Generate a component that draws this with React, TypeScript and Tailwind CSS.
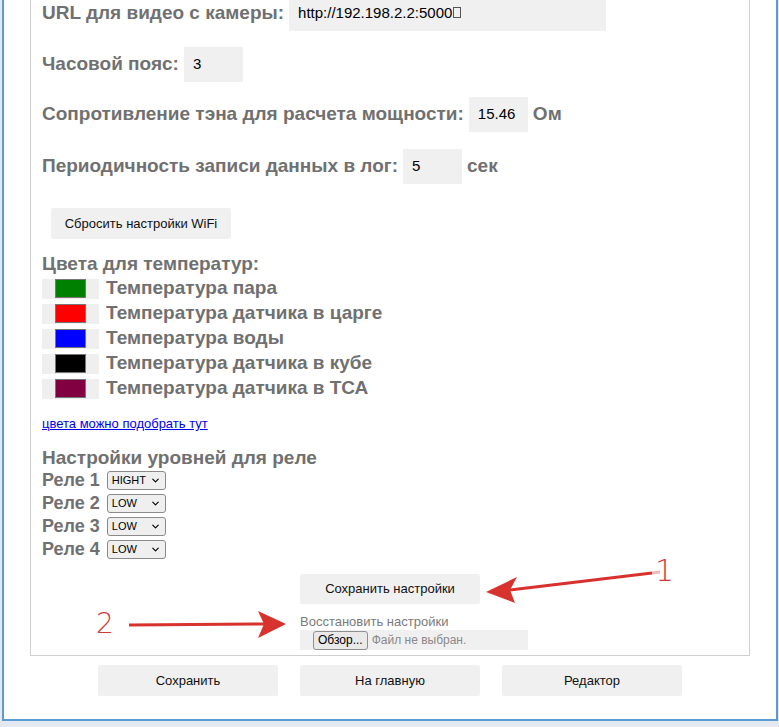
import { ChevronDown } from 'lucide-react';

const colors = [
  { color: '#008000', label: 'Температура пара' },
  { color: '#ff0000', label: 'Температура датчика в царге' },
  { color: '#0000ff', label: 'Температура воды' },
  { color: '#000000', label: 'Температура датчика в кубе' },
  { color: '#800040', label: 'Температура датчика в ТСА' },
];

const relays = [
  { name: 'Реле 1', value: 'HIGHT' },
  { name: 'Реле 2', value: 'LOW' },
  { name: 'Реле 3', value: 'LOW' },
  { name: 'Реле 4', value: 'LOW' },
];

function Field({ value, width, children }: { value: string; width: string; children?: React.ReactNode }) {
  return (
    <div className={`${width} h-[35px] ml-[5px] bg-[#f0f0f0] flex items-center pl-[9px] text-[15px] text-black font-normal`}>
      {value}
      {children}
    </div>
  );
}

export default function App() {
  return (
    <div className="relative w-[779px] h-[727px] overflow-hidden bg-[#e4e9ef] font-['Liberation_Sans',Arial,sans-serif]">
      <div className="ml-[2px] w-[776px] h-[725px] bg-white border-x-2 border-b-2 border-[#5b9bd5] pl-[26px]">
        {/* settings panel */}
        <div className="-mt-[4px] w-[720px] h-[660px] border-x border-b border-[#cfcfcf] pl-[11px] flex flex-col items-start text-[#707070] font-bold">
          <div className="h-[35px] flex items-center text-[19px]">
            URL для видео с камеры:
            <Field value="http://192.198.2.2:5000" width="w-[317px]">
              <span className="inline-block w-[8px] h-[11px] border border-[#555] ml-[1px] mb-[2px]" />
            </Field>
          </div>
          <div className="mt-[16px] h-[35px] flex items-center text-[19px]">
            Часовой пояс:
            <Field value="3" width="w-[59px]" />
          </div>
          <div className="mt-[15px] h-[35px] flex items-center text-[19px]">
            Сопротивление тэна для расчета мощности:
            <Field value="15.46" width="w-[59px]" />
            <span className="ml-[5px]">Ом</span>
          </div>
          <div className="mt-[17px] h-[35px] flex items-center text-[19px]">
            Периодичность записи данных в лог:
            <Field value="5" width="w-[59px]" />
            <span className="ml-[5px]">сек</span>
          </div>
          <button className="mt-[24px] ml-[9px] w-[180px] h-[31px] bg-[#f0f0f0] rounded-[2px] text-[13px] font-normal text-[#111]">
            Сбросить настройки WiFi
          </button>

          <div className="mt-[14px] text-[19px] leading-[21px]">Цвета для температур:</div>
          <div className="mt-[2px] flex flex-col">
            {colors.map((c) => (
              <div key={c.label} className="h-[25px] flex items-center text-[19px]">
                <div className="w-[57px] h-[20px] bg-[#efefef] flex items-center">
                  <div className="ml-[13px] w-[31px] h-[19px] border border-[#777]" style={{ background: c.color }} />
                </div>
                <span className="ml-[7px]">{c.label}</span>
              </div>
            ))}
          </div>

          <a href="#" className="mt-[15px] text-[13px] leading-[15px] font-normal text-[#0000ee] underline">
            цвета можно подобрать тут
          </a>

          <div className="mt-[16px] text-[19px] leading-[21px]">Настройки уровней для реле</div>
          <div className="mt-[1px] flex flex-col">
            {relays.map((r) => (
              <div key={r.name} className="h-[23px] flex items-center text-[18px]">
                {r.name}
                <div className="ml-[7px] w-[59px] h-[19px] border border-[#8a8a8a] rounded-[3px] bg-[#efefef] flex items-center justify-between pl-[4px] pr-[4px] text-[11px] font-normal text-black">
                  {r.value}
                  <ChevronDown size={11} strokeWidth={2.5} />
                </div>
              </div>
            ))}
          </div>

          <button className="mt-[13px] ml-[258px] w-[180px] h-[30px] bg-[#f0f0f0] rounded-[2px] text-[13px] font-normal text-[#111]">
            Сохранить настройки
          </button>
          <div className="mt-[10px] ml-[258px] text-[13px] leading-[16px] font-normal text-[#7a7a7a]">Восстановить настройки</div>
          <div className="ml-[258px] w-[228px] h-[20px] bg-[#f0f0f0] flex items-center pl-[13px] text-[12px] font-normal">
            <span className="h-[19px] px-[4px] flex items-center border border-[#8f8f8f] rounded-[3px] bg-[#e9e9e9] text-black">
              Обзор...
            </span>
            <span className="ml-[4px] text-[#8a8a8a]">Файл не выбран.</span>
          </div>
        </div>

        {/* bottom buttons */}
        <div className="mt-[9px] flex justify-center gap-[22px] pr-[26px]">
          {['Сохранить', 'На главную', 'Редактор'].map((t) => (
            <button key={t} className="w-[180px] h-[31px] bg-[#f0f0f0] rounded-[2px] text-[13px] text-[#111]">
              {t}
            </button>
          ))}
        </div>
      </div>

      {/* red annotations */}
      <svg className="absolute inset-0 pointer-events-none" width="779" height="727" viewBox="0 0 779 727">
        <line x1="652" y1="573" x2="510" y2="590" stroke="#d8322e" strokeWidth="3" />
        <line x1="652" y1="573" x2="660" y2="572" stroke="#f2b8b8" strokeWidth="3" />
        <polygon points="486,592 517,577 510,590 515,603" fill="#d8322e" />
        <line x1="129" y1="625" x2="266" y2="624" stroke="#d8322e" strokeWidth="3" />
        <polygon points="286,624 258,611 264,624 258,638" fill="#d8322e" />
      </svg>
      <span className="absolute left-[655px] top-[555px] text-[30px] leading-[32px] text-[#d03a3a] font-['DejaVu_Sans',sans-serif] font-extralight">1</span>
      <span className="absolute left-[96px] top-[609px] text-[28px] leading-[30px] text-[#d03a3a] font-['DejaVu_Sans',sans-serif] font-extralight">2</span>
    </div>
  );
}
